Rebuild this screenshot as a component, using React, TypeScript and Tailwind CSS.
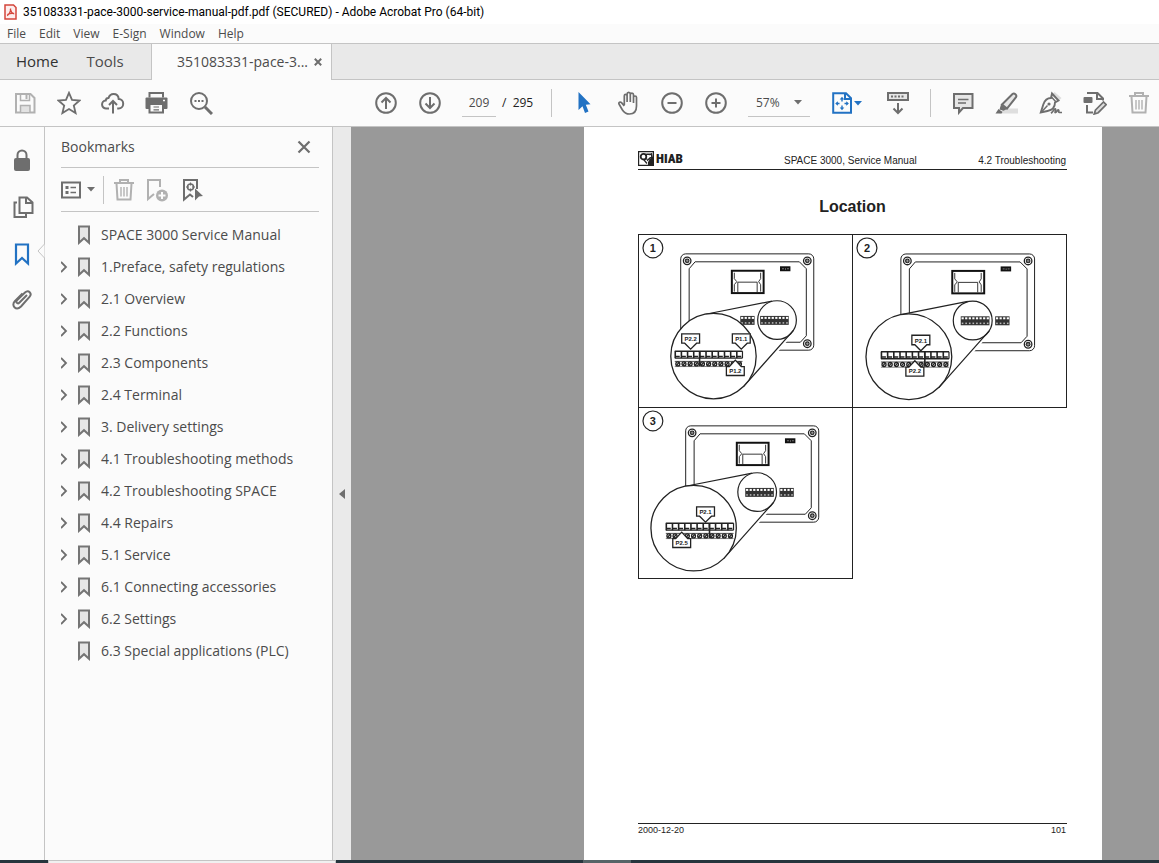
import type { ReactNode } from "react";

const GREY = "#6e6e6e";

function Glyph({ children, size = 24, color = GREY, width = 2 }: { children: ReactNode; size?: number; color?: string; width?: number }) {
  return (
    <svg width={size} height={size} viewBox="0 0 24 24" fill="none" stroke={color} strokeWidth={width} className="shrink-0" aria-hidden="true">
      {children}
    </svg>
  );
}

function ToolButton({ label, children }: { label: string; children: ReactNode }) {
  return (
    <button type="button" aria-label={label} className="flex h-11 w-11 shrink-0 items-center justify-center">
      {children}
    </button>
  );
}

function Caret({ color = GREY }: { color?: string }) {
  return (
    <svg width="8" height="5" viewBox="0 0 8 5" fill={color} aria-hidden="true" className="shrink-0">
      <path d="M0 0h8L4 4.6z" />
    </svg>
  );
}

function TrashIcon() {
  return (
    <Glyph color="#b1b1b1">
      <path d="M2 5h20M8 4.500V2h8v2.500M4.500 5.500l1 16h13l1-16" />
      <path d="M9 9v9.500M12 9v9.500M15 9v9.500" strokeWidth="1.400" />
    </Glyph>
  );
}

function BookmarkIcon() {
  return (
    <svg width="14" height="20" viewBox="0 0 14 20" fill="#e6e6e6" stroke="#757575" strokeWidth="2" aria-hidden="true" className="shrink-0">
      <path d="M2 1.500h10v16.300l-5-4.600-5 4.600z" />
    </svg>
  );
}

function Toolbar() {
  return (
    <div className="flex h-[47px] shrink-0 items-center overflow-hidden border-b border-[#c4c4c4] bg-[#fbfbfb] pl-[3px]">
      <ToolButton label="Save">
        <Glyph color="#b1b1b1">
          <path d="M3 3h14.500L21.500 7v14.500H3z" />
          <path d="M7.500 3v6.500h9V3" strokeWidth="1.500" />
          <path d="M13.500 4v4" strokeWidth="2" />
          <path d="M7.500 21v-6.500h9.500V21" fill="#e2e2e2" strokeWidth="1.500" />
        </Glyph>
      </ToolButton>
      <ToolButton label="Star">
        <Glyph>
          <path d="M12 1.800l3 7 7.600.7-5.800 5 1.800 7.500L12 18l-6.600 4 1.800-7.500-5.800-5 7.600-.7z" strokeWidth="1.800" />
        </Glyph>
      </ToolButton>
      <ToolButton label="Upload to cloud">
        <Glyph>
          <path d="M8 17.500H5.500a4 4 0 0 1-.8-8c.3-1.800 1.500-2.600 2.800-2.500C8.500 4.200 10.300 3 12.500 3c3.200 0 5 2.200 5.200 5 2.700 0 4.500 2 4.500 4.700s-2 4.800-4.500 4.800h-1.500" />
          <path d="M12 22.500v-12M8 14l4-4 4 4" />
        </Glyph>
      </ToolButton>
      <ToolButton label="Print">
        <Glyph>
          <path d="M4.500 6.500V2h13.500v4.500" />
          <rect x="0.500" y="6.500" width="22" height="11.500" rx="1" fill={GREY} stroke="none" />
          <path d="M4.500 13h13.500v8.500H4.500z" fill="#fbfbfb" />
          <path d="M8.500 16h5.500M8.500 18.800h5.500" strokeWidth="1.200" />
          <path d="M18 9.500h2" stroke="#fbfbfb" strokeWidth="1.500" />
        </Glyph>
      </ToolButton>
      <ToolButton label="Find">
        <Glyph>
          <circle cx="10" cy="10" r="8" />
          <path d="M16 16l7 7" strokeWidth="3" />
          <path d="M5.500 10h2M9 10h2M12.500 10h2" />
        </Glyph>
      </ToolButton>

      <div className="ml-[141px] flex">
        <ToolButton label="Previous page">
          <Glyph>
            <circle cx="12" cy="12" r="9.800" />
            <path d="M12 18V7M7.500 11.500L12 7l4.500 4.500" />
          </Glyph>
        </ToolButton>
        <ToolButton label="Next page">
          <Glyph>
            <circle cx="12" cy="12" r="9.800" />
            <path d="M12 6v11M7.500 12.500L12 17l4.500-4.500" />
          </Glyph>
        </ToolButton>
      </div>
      <input aria-label="Page number" defaultValue="209" className="ml-2.5 h-7 w-[34px] shrink-0 border-b border-[#c4c4c4] bg-transparent text-center text-xs text-[#4b4b4b]" />
      <span className="w-[55px] shrink-0 whitespace-pre pl-1.5 text-xs text-[#222]">/  295</span>
      <span className="h-7 w-px shrink-0 bg-[#c4c4c4]" />
      <div className="ml-2.5 flex">
        <ToolButton label="Select">
          <svg width="14" height="22" viewBox="0 0 14 22" fill="#2272c3" aria-hidden="true">
            <path d="M1.500 0v18l4-3.800L8 21l3.500-1.500L8.800 12.800l4.700-.5z" />
          </svg>
        </ToolButton>
        <ToolButton label="Hand">
          <Glyph>
            <path d="M6.800 14V4.800c0-2 2.800-2 2.800 0V11 3c0-2.200 3.200-2.200 3.200 0v8V3.800c0-2.200 3.200-2.200 3.200 0V12 6.500c0-2 3-2 3 0V15c0 5-2.500 8-7 8-3.800 0-5.500-1.600-7.200-4.300L1.500 13c-.8-1.700 1.300-2.500 2.500-1.300L6.800 15" strokeWidth="1.700" transform="translate(1.500 0)" />
          </Glyph>
        </ToolButton>
        <ToolButton label="Zoom out">
          <Glyph>
            <circle cx="12" cy="12" r="9.800" />
            <path d="M7.500 12h9" />
          </Glyph>
        </ToolButton>
        <ToolButton label="Zoom in">
          <Glyph>
            <circle cx="12" cy="12" r="9.800" />
            <path d="M7.500 12h9M12 7.500v9" />
          </Glyph>
        </ToolButton>
      </div>
      <label className="relative ml-2.5 flex h-7 w-[62px] shrink-0 items-center border-b border-[#c4c4c4]">
        <select aria-label="Zoom level" defaultValue="57%" className="w-full appearance-none bg-transparent pl-2 text-xs text-[#4b4b4b]">
          <option>57%</option>
          <option>100%</option>
        </select>
        <span className="pointer-events-none absolute right-2">
          <Caret />
        </span>
      </label>
      <button type="button" aria-label="Fit page" className="ml-5 flex h-11 w-[46px] shrink-0 items-center">
        <Glyph color="#2272c3">
          <path d="M3.200 2.200H16l5 5v14.600H3.200z" />
          <path d="M15 2v6h6" />
          <path d="M12 7.500v3M12 14.500v3M6.500 12.500h3M14.500 12.500h3" strokeWidth="1.400" />
          <path d="M12 5.800l2.300 2.700H9.700zM12 19.300l2.300-2.700H9.700zM5.200 12.500L7.900 10.200v4.600zM18.900 12.500l-2.700-2.300v4.600z" fill="#2272c3" stroke="none" />
        </Glyph>
        <Caret color="#2272c3" />
      </button>
      <ToolButton label="Scroll mode">
        <Glyph>
          <path d="M2 2h20v7H2z" fill="#e6e6e6" />
          <path d="M5 5.500h2M8.500 5.500h2M12 5.500h2M15.500 5.500h2" strokeWidth="1.800" />
          <path d="M12 12v10M7.500 17.500L12 22l4.500-4.500" />
        </Glyph>
      </ToolButton>
      <span className="ml-2.5 h-7 w-px shrink-0 bg-[#c4c4c4]" />
      <div className="ml-2.5 flex">
        <ToolButton label="Comment">
          <Glyph>
            <path d="M3 3h18.500v14H12l-4 4.500V17H3z" fill="#e6e6e6" />
            <path d="M7 8.500h10.500M7 12h8" strokeWidth="1.300" />
          </Glyph>
        </ToolButton>
        <ToolButton label="Highlight">
          <Glyph>
            <path d="M9 17.500h14v5H4z" fill="#dedede" stroke="none" />
            <path d="M7 13.500L17.500 3c1.800-1.500 4.800 1 3.500 3.200L12 17.500z" fill="#e6e6e6" />
            <path d="M6 13.500l6 4.500-3.500 1.800-4-1.300zM.5 22.500L3.500 18l4 3-1 1.500z" fill={GREY} stroke="none" />
          </Glyph>
        </ToolButton>
        <ToolButton label="Sign">
          <Glyph>
            <path d="M13 4l2.500-3L22.500 7l-3 3z" fill="#dedede" stroke="none" />
            <path d="M13 2.500l6.500 7-3.500 2c0 4-2.500 7.500-7.500 8.500l-6.700 1.500 2.500-8C5.800 9 8.500 7 12 7z" strokeWidth="1.900" />
            <path d="M2 21.500l6.500-7M12.500 6l4.500 5" strokeWidth="1.500" />
            <circle cx="10" cy="13" r="1.600" fill={GREY} stroke="none" />
            <path d="M12 22.200c2-1.500 3.500-5 4.500-4.200s-1.500 4 0 3.500 2-3 3-2.500-.5 2.500.8 2.500H23" strokeWidth="1.700" />
          </Glyph>
        </ToolButton>
        <ToolButton label="Edit document">
          <Glyph>
            <path d="M4 2h10.500l5.500 5.500v2M4 14v7.500h6M14 2v6h6" />
            <rect x="0.500" y="6" width="9" height="6" rx="1" fill={GREY} stroke="none" />
            <path d="M12.500 19l8-8 2.700 2.700-8 8-4 1.300z" fill="#dedede" strokeWidth="1.700" />
          </Glyph>
        </ToolButton>
        <ToolButton label="Delete">
          <TrashIcon />
        </ToolButton>
      </div>
    </div>
  );
}

const bookmarks = [
  { title: "SPACE 3000 Service Manual", nested: false },
  { title: "1.Preface, safety regulations", nested: true },
  { title: "2.1 Overview", nested: true },
  { title: "2.2 Functions", nested: true },
  { title: "2.3 Components", nested: true },
  { title: "2.4 Terminal", nested: true },
  { title: "3. Delivery settings", nested: true },
  { title: "4.1 Troubleshooting methods", nested: true },
  { title: "4.2 Troubleshooting SPACE", nested: true },
  { title: "4.4 Repairs", nested: true },
  { title: "5.1 Service", nested: true },
  { title: "6.1 Connecting accessories", nested: true },
  { title: "6.2 Settings", nested: true },
  { title: "6.3 Special applications (PLC)", nested: false },
];

function Rail() {
  return (
    <nav aria-label="Navigation panes" className="relative flex w-[45px] shrink-0 flex-col items-start border-r border-[#c4c4c4] bg-[#fbfbfb] pl-2.5 pt-[21px]">
      <button type="button" aria-label="Security" className="flex h-[47px] items-start">
        <Glyph>
          <path d="M7.500 12V7a4.500 4.500 0 0 1 9 0v5" strokeWidth="2" />
          <rect x="4" y="10" width="16" height="13" rx="2" fill={GREY} stroke="none" />
        </Glyph>
      </button>
      <button type="button" aria-label="Page thumbnails" className="flex h-[47px] items-start">
        <Glyph>
          <path d="M9.500 2.500h7.500l5.500 5V18h-13z" fill="#fbfbfb" />
          <path d="M16 2.500V8h6M7 7.500H4.500v14.500H16V18.500" />
        </Glyph>
      </button>
      <button type="button" aria-label="Bookmarks" className="flex h-[45px] items-start">
        <Glyph color="#2272c3">
          <path d="M6 2.500h12v19l-6-5.500-6 5.500z" strokeWidth="2.200" />
        </Glyph>
      </button>
      <button type="button" aria-label="Attachments" className="flex items-start">
        <Glyph>
          <path d="M17 8l-7.500 7.500c-2 2-4.300-.3-2.500-2.200l8-7.800c3.500-3.300 7.500 1 4.500 4.300L11 19.500C6 24.300.5 18.500 5 14L12.500 6.500" />
        </Glyph>
      </button>
      <svg width="8" height="14" viewBox="0 0 8 14" className="absolute -right-px top-[117px]" fill="#fbfbfb" stroke="#c4c4c4" aria-hidden="true">
        <path d="M7.500 0L1 7l6.500 7" />
      </svg>
    </nav>
  );
}

function BookmarksPanel() {
  return (
    <aside className="flex w-72 shrink-0 flex-col border-r border-[#c4c4c4] bg-[#fbfbfb] pl-4 pr-[13px]">
      <div className="flex h-[41px] items-center justify-between border-b border-[#c4c4c4] pr-2">
        <h2 className="text-sm text-[#4b4b4b]">Bookmarks</h2>
        <button type="button" aria-label="Close pane">
          <svg width="14" height="14" viewBox="0 0 14 14" stroke={GREY} strokeWidth="2.200" aria-hidden="true">
            <path d="M1.500 1.500l11 11M12.500 1.500l-11 11" />
          </svg>
        </button>
      </div>
      <div className="flex h-11 items-center border-b border-[#c4c4c4]">
        <button type="button" aria-label="Options" className="flex w-[42px] items-center gap-1.5">
          <svg width="20" height="18" viewBox="0 0 20 18" fill="none" stroke={GREY} strokeWidth="2" aria-hidden="true">
            <path d="M1 1.500h18v15H1z" />
            <path d="M4.500 6.500h3M4.500 11.500h3" strokeWidth="3" />
            <path d="M9.500 6.500H15M9.500 11.500H15" strokeWidth="1.500" />
          </svg>
          <Caret />
        </button>
        <span className="h-7 w-px bg-[#c4c4c4]" />
        <button type="button" aria-label="Delete bookmark" className="ml-2">
          <TrashIcon />
        </button>
        <button type="button" aria-label="New bookmark" className="ml-2">
          <Glyph color="#b1b1b1">
            <path d="M16 9V2H4v19l6-5" />
            <circle cx="18" cy="17.500" r="6" fill="#b1b1b1" stroke="none" />
            <path d="M14.500 17.500h7M18 14v7" stroke="#fbfbfb" />
          </Glyph>
        </button>
        <button type="button" aria-label="Find current bookmark" className="ml-3">
          <Glyph>
            <path d="M17 11V2H4v19.500l6-5 3 2.500" />
            <circle cx="10.500" cy="9" r="3" strokeWidth="1.500" />
            <path d="M10.500 4.500v3M10.500 10.500v3M6 9h3M12 9h3" strokeWidth="1.200" />
            <path d="M15 10.500l8 7.500-4 .5-4 4z" fill={GREY} stroke="none" />
          </Glyph>
        </button>
      </div>
      <ul className="pt-[7px]">
        {bookmarks.map((item) => (
          <li key={item.title}>
            <button type="button" className="flex h-8 items-center whitespace-nowrap text-sm text-[#4b4b4b]">
              <span className="flex w-4 shrink-0 justify-start">
                {item.nested && (
                  <svg width="8" height="12" viewBox="1 0 8 12" fill="none" stroke={GREY} strokeWidth="1.800" aria-hidden="true">
                    <path d="M1 1l5 5-5 5" />
                  </svg>
                )}
              </span>
              <BookmarkIcon />
              <span className="pl-2.5">{item.title}</span>
            </button>
          </li>
        ))}
      </ul>
    </aside>
  );
}

const INK = "#222222";

function Screw({ x, y }: { x: number; y: number }) {
  return (
    <g>
      <circle cx={x} cy={y} r="3.800" fill="#fff" stroke={INK} strokeWidth="1.300" />
      <circle cx={x} cy={y} r="2.400" fill={INK} />
      <path d={`M${x - 1.500} ${y}h3M${x} ${y - 1.500}v3`} stroke="#bbb" strokeWidth=".7" />
    </g>
  );
}

function MiniStrip({ x, cells }: { x: number; cells: number }) {
  return (
    <g>
      <rect x={x} y="62.500" width={cells * 3.600} height="9" fill="#333" />
      {Array.from({ length: cells }, (_, i) => (
        <g key={i}>
          <rect x={x + 0.800 + i * 3.600} y="63.500" width="2.200" height="2" fill="#fff" />
          <rect x={x + 1 + i * 3.600} y="68.800" width="1.600" height="1.500" fill="#bbb" />
        </g>
      ))}
    </g>
  );
}

function BigStrip({ x, cells, divider }: { x: number; cells: number; divider: number }) {
  return (
    <g stroke={INK}>
      <path d={`M${x} 98h${cells * 6.200}M${x} 105h${cells * 6.200}`} strokeWidth="1.500" />
      <path d={`M${x} 108.300h${cells * 6.200}`} strokeWidth=".8" />
      {Array.from({ length: cells }, (_, i) => (
        <g key={i}>
          <path d={`M${x + 0.500 + i * 6.200} 98v7M${x + 1 + i * 6.200} 103.300h4`} strokeWidth="1.600" fill="none" />
          <circle cx={x + 3.100 + i * 6.200} cy="110.800" r="2" strokeWidth="1.300" fill="#fff" />
          <path d={`M${x + 1.800 + i * 6.200} 112.200l2.600-2.800`} strokeWidth="1.300" />
        </g>
      ))}
      <path d={`M${x} 113.500h${cells * 6.200}`} strokeWidth=".6" />
      <path d={`M${x + cells * 6.200} 98v7`} strokeWidth="1.200" />
      <path d={`M${divider} 98v15`} strokeWidth="1.600" />
    </g>
  );
}

type Callout = { text: string; x: number; y: number; up?: boolean };

function CalloutTag({ text, x, y, up }: Callout) {
  const shape = up
    ? `M${x - 9} ${y + 15.500}V${y + 6.500}h3L${x} ${y}l6 6.500h3v9z`
    : `M${x - 9} ${y - 16}v9.500h3L${x} ${y - 0.500}l6-6h3v-9.500z`;
  return (
    <g>
      <path d={shape} fill="#fff" stroke={INK} strokeWidth="1.300" />
      <text x={x} y={up ? y + 12.500 : y - 8.500} textAnchor="middle" fontSize="6" fontWeight="700" fill={INK}>
        {text}
      </text>
    </g>
  );
}

type FigureProps = { n: number; dx: number; dy: number; shift: number; strips: [number, number][]; big: [number, number, number]; tags: Callout[]; className: string };

function Figure({ n, dx, dy, shift, strips, big, tags, className }: FigureProps) {
  return (
    <figure className={`border-[#222] ${className}`}>
      <svg viewBox="0 0 214 172" className="block w-full" fill="none" fontFamily="Liberation Sans, Arial, sans-serif" role="img" aria-label={`Location ${n}`}>
        <circle cx="14" cy="13" r="10" stroke={INK} strokeWidth="1.200" />
        <text x="14" y="17" textAnchor="middle" fontSize="11" fontWeight="700" fill={INK}>
          {n}
        </text>
        <g transform={`translate(${dx} ${dy})`}>
          <rect width="134" height="97" rx="5" stroke={INK} strokeWidth="1" />
          <path d="M14.500 8h105l7 7v67.500l-6 6.500h-106l-6-6.500V15z" stroke={INK} strokeWidth="1" />
          <Screw x={6.500} y={7} />
          <Screw x={127.500} y={7} />
          <Screw x={127.500} y={90.500} />
          <rect x="51.500" y="17" width="32" height="22.500" stroke="#111" strokeWidth="2" />
          <path d="M54 19v6l2.500 3-2.500 3v7M80.500 19v6l-2 3 2 3v7M57.500 38.500V28.500h19.500v10" stroke={INK} strokeWidth=".9" />
          <rect x="100" y="12.500" width="10.500" height="5" fill="#111" />
          <path d="M102 15h2M105.500 14.500v1.500M107 15h2" stroke="#999" strokeWidth=".8" />
          <path d={`M${shift - 3} 60.500L${shift + 59} 47.300h9L${shift + 82} 79 ${shift + 42} 125z`} fill="#fff" />
          <circle cx={shift + 64} cy="66.700" r="19.500" fill="#fff" stroke={INK} strokeWidth="1.200" />
          <path d={`M${shift - 8} 60.800L${shift + 59} 47.600M${shift + 30} 134L${shift + 80.500} 77`} stroke={INK} strokeWidth="1.200" />
          {strips.map(([x, cells]) => (
            <MiniStrip key={x} x={x} cells={cells} />
          ))}
          <circle cx={shift} cy="103" r="43" fill="#fff" stroke={INK} strokeWidth="1.300" />
          <BigStrip x={big[0]} cells={big[1]} divider={big[2]} />
          {tags.map((tag) => (
            <CalloutTag key={tag.text} {...tag} />
          ))}
        </g>
      </svg>
    </figure>
  );
}

function ManualPage() {
  return (
    <article className="flex w-[518px] shrink-0 flex-col bg-white pl-[54px] pr-[35px] pt-6 font-['Liberation_Sans',Arial,sans-serif] text-[#222]">
      <header className="flex h-[19px] items-end border-b border-[#222] pr-px text-[10px] leading-4">
        <div className="flex w-[146px] items-center gap-0.5 self-start">
          <svg width="16" height="15" viewBox="0 0 16 15" aria-hidden="true">
            <path d="M.6.6h14.800v13.800H.6z" fill="#fff" stroke="#222" strokeWidth="1.200" />
            <path d="M10 14.500V11l2-3 3-2.500v9z" fill="#222" />
            <circle cx="5.500" cy="5.700" r="2.800" fill="none" stroke="#222" strokeWidth="1.800" />
            <path d="M7.500 3.500c2.500-.8 4 .5 6-.5l.5 3.500c-2 0-3 1-3.500 2.500" fill="none" stroke="#222" strokeWidth="1.600" />
            <path d="M6 9l3 3.500M8.500 7.500L10 10" stroke="#222" strokeWidth="1.200" />
          </svg>
          <span className="font-['Roboto_Condensed','Roboto',sans-serif] text-[13px] font-black leading-[15px]">HIAB</span>
        </div>
        <span className="flex-1">SPACE 3000, Service Manual</span>
        <span>4.2 Troubleshooting</span>
      </header>
      <h1 className="pt-[25px] text-center text-base font-bold leading-6">Location</h1>
      <div className="mt-[15px] grid grid-cols-2">
        <Figure
          n={1}
          dx={42}
          dy={19}
          shift={33}
          strips={[[80, 8], [60, 4]]}
          big={[-6, 11, 19]}
          tags={[{ text: "P2.2", x: 10, y: 96.500 }, { text: "P1.1", x: 61, y: 96.500 }, { text: "P1.2", x: 55, y: 107, up: true }]}
          className="border"
        />
        <Figure
          n={2}
          dx={48}
          dy={19}
          shift={8}
          strips={[[60, 8], [94.500, 4]]}
          big={[-20, 11, 24]}
          tags={[{ text: "P2.1", x: 20, y: 97.500 }, { text: "P2.2", x: 14, y: 107, up: true }]}
          className="border-b border-r border-t"
        />
        <Figure
          n={3}
          dx={47}
          dy={18}
          shift={8}
          strips={[[60, 8], [94.500, 4]]}
          big={[-20, 11, 24]}
          tags={[{ text: "P2.1", x: 20, y: 97.500 }, { text: "P2.5", x: -4, y: 107, up: true }]}
          className="border-x border-b"
        />
      </div>
      <footer className="mb-6 mt-auto flex justify-between border-t border-[#222] pr-px text-[9px] leading-3">
        <span>2000-12-20</span>
        <span>101</span>
      </footer>
    </article>
  );
}

export default function App() {
  return (
    <div className="flex h-screen flex-col overflow-hidden bg-white font-['Open_Sans','Noto_Sans',sans-serif]">
      <header className="flex h-6 shrink-0 items-center gap-1.5 pl-1 text-black">
        <svg width="13" height="16" viewBox="0 0 13 16" fill="none" stroke="#d4463b" aria-hidden="true">
          <path d="M1 1h8.500L12 3.500V15H1z" fill="#fdeeee" strokeWidth="1.500" />
          <path d="M3 11.500c2-.5 4-4.500 3.500-7M6.300 5c.5 3 2.500 4.500 4 5M3.500 10.500c2-1 4.500-1.500 6.500-1" strokeWidth="1.300" />
        </svg>
        <span className="whitespace-nowrap font-['Roboto','Open_Sans',sans-serif] text-xs">351083331-pace-3000-service-manual-pdf.pdf (SECURED) - Adobe Acrobat Pro (64-bit)</span>
      </header>
      <nav aria-label="Menu bar" className="flex h-[19px] shrink-0 items-center gap-[13px] bg-[#fbfbfb] pl-[7px] text-xs leading-4 text-[#4b4b4b]">
        {["File", "Edit", "View", "E-Sign", "Window", "Help"].map((name) => (
          <button key={name} type="button">
            {name}
          </button>
        ))}
      </nav>
      <div className="flex h-[37px] shrink-0 border-t border-[#c4c4c4] bg-[#e9e9e9] text-sm text-[#323232]">
        <div className="flex w-[152px] shrink-0 items-center gap-7 border-b border-r border-[#c4c4c4] pl-4 text-[15px]">
          <button type="button">Home</button>
          <button type="button" className="text-[#4b4b4b]">Tools</button>
        </div>
        <div className="flex w-[179px] shrink-0 items-center gap-1.5 bg-[#fbfbfb] pl-[25px] text-[#4b4b4b]">
          <button type="button">351083331-pace-3...</button>
          <button type="button" aria-label="Close tab">
            <svg width="8" height="8" viewBox="0 0 8 8" stroke={GREY} strokeWidth="2" aria-hidden="true">
              <path d="M.8.8l6.400 6.400M7.200.8L.8 7.200" />
            </svg>
          </button>
        </div>
        <div className="flex-1 border-b border-l border-[#c4c4c4]" />
      </div>
      <Toolbar />
      <main className="flex min-h-0 flex-1">
        <Rail />
        <BookmarksPanel />
        <button type="button" aria-label="Collapse pane" className="flex w-[18px] shrink-0 items-center justify-center bg-[#eaeaea]">
          <svg width="6" height="10" viewBox="0 0 6 10" fill={GREY} aria-hidden="true">
            <path d="M6 0v10L0 5z" />
          </svg>
        </button>
        <section aria-label="Document" className="flex flex-1 justify-end bg-[#999] pr-[57px]">
          <ManualPage />
        </section>
      </main>
      <div className="flex h-[3px] shrink-0 bg-[#26353d]">
        <div className="ml-12 w-72 border border-b-0 border-[#c4c4c4] bg-[#f0f0f0]" />
        <div className="ml-[247px] w-12 bg-[#566467]" />
      </div>
    </div>
  );
}
